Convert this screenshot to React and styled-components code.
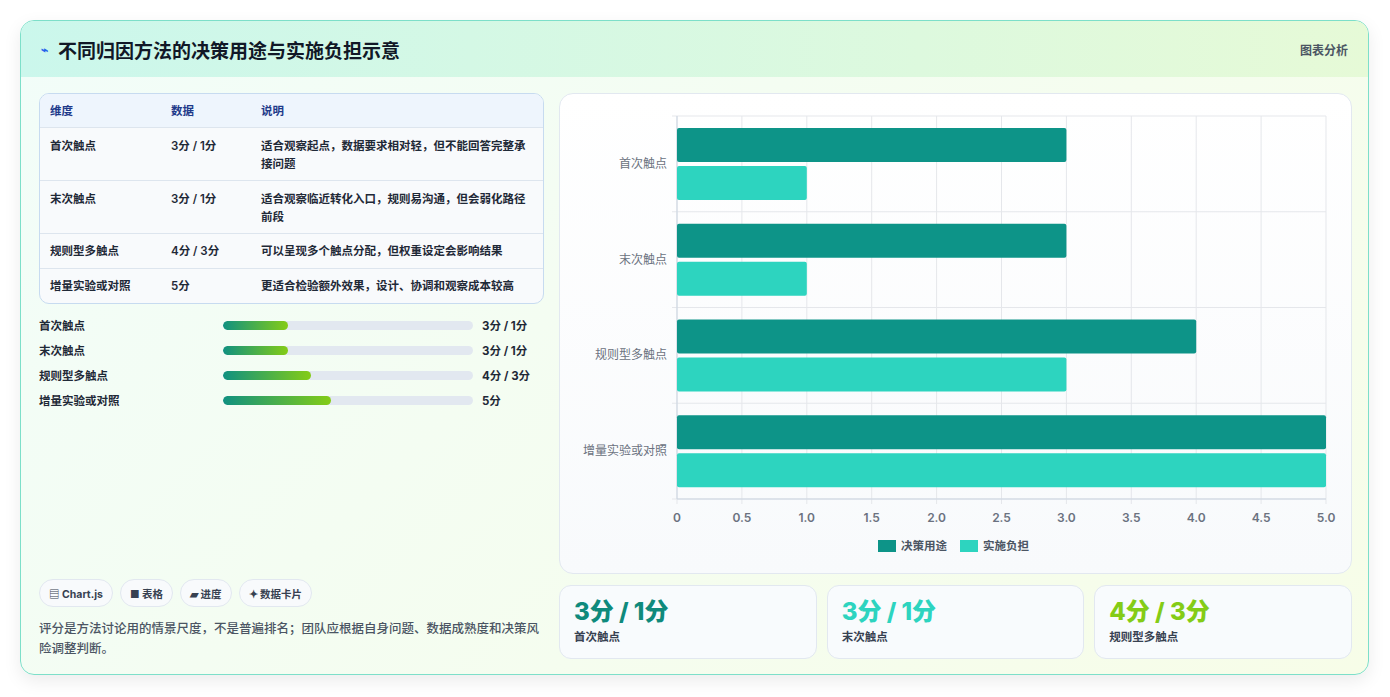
import React from "react";
import styled, { createGlobalStyle } from "styled-components";

const G = createGlobalStyle`
  body{margin:0;background:#f3f4f6;font-family:Inter,"Noto Sans CJK SC",sans-serif;}
  *{box-sizing:border-box;}
`;
const Page = styled.div`padding:20px 21px 22px 20px;height:697px;background:#fff;`;
const Card = styled.div`
  height:655px;border:1px solid #7ddfc9;border-radius:14px;overflow:hidden;
  background:linear-gradient(135deg,#f2fdf9,#f7fde8);display:flex;flex-direction:column;
  box-shadow:0 6px 18px rgba(0,0,0,.08);
`;
const Header = styled.div`
  height:56px;flex:none;display:flex;align-items:center;justify-content:space-between;padding:0 20px 0 20px;
  background:linear-gradient(90deg,#cbf7ec,#e6fad7);
`;
const Title = styled.h1`margin:0;font-size:19px;font-weight:700;color:#111827;display:flex;align-items:center;gap:10px;`;
const Badge = styled.span`font-size:12px;font-weight:600;color:#4b5563;`;
const Body = styled.div`flex:1;display:grid;grid-template-columns:505px 1fr;gap:15px;padding:16px 18px 18px 18px;`;
const Left = styled.div`display:flex;flex-direction:column;`;
const Table = styled.div`border:1px solid #c7dbf0;border-radius:10px;overflow:hidden;background:#f8fafc;`;
const Row = styled.div`
  display:grid;grid-template-columns:121px 90px 1fr;padding:0 10px;border-top:${p=>p.$head?"none":"1px solid #dde5ee"};
  background:${p=>p.$head?"#eef5fd":"transparent"};font-size:11.5px;font-weight:600;color:${p=>p.$head?"#1e3a8a":"#1f2937"};
  min-height:${p=>p.$h}px;align-items:${p=>p.$top?"start":"center"};padding-top:${p=>p.$top?"9px":"0"};line-height:18px;
`;
const Prog = styled.div`display:flex;flex-direction:column;gap:7px;margin-top:12px;`;
const PRow = styled.div`display:grid;grid-template-columns:184px 250px 1fr;align-items:center;font-size:11.5px;font-weight:600;color:#1f2937;height:18px;`;
const Track = styled.div`height:9px;border-radius:5px;background:#e2e8f0;overflow:hidden;`;
const Fill = styled.div`height:100%;border-radius:5px;background:linear-gradient(90deg,#109180,#84cc16);`;
const Val = styled.span`padding-left:9px;font-weight:700;`;
const Chips = styled.div`margin-top:auto;display:flex;gap:7px;`;
const Chip = styled.span`height:28px;padding:0 9px;border:1px solid #e2e8f0;border-radius:14px;background:#f8fafc;font-size:10.5px;font-weight:700;color:#374151;display:flex;align-items:center;gap:3px;`;
const Note = styled.p`margin:12px 0 0;font-size:12.5px;line-height:20px;color:#4b5563;font-weight:500;`;
const Right = styled.div`display:flex;flex-direction:column;gap:11px;`;
const ChartBox = styled.div`height:481px;border:1px solid #e2e8f0;border-radius:14px;background:linear-gradient(180deg,#fff,#f8fafc);`;
const Stats = styled.div`display:grid;grid-template-columns:repeat(3,1fr);gap:10px;`;
const Stat = styled.div`height:74px;border:1px solid #e2e8f0;border-radius:12px;background:#f8fbfd;padding:10px 14px;`;
const SVal = styled.div`font-size:24px;font-weight:800;color:${p=>p.$c};line-height:32px;`;
const SLab = styled.div`font-size:11.5px;font-weight:600;color:#374151;`;

const rows=[["首次触点","3分 / 1分","适合观察起点，数据要求相对轻，但不能回答完整承接问题",53],["末次触点","3分 / 1分","适合观察临近转化入口，规则易沟通，但会弱化路径前段",53],["规则型多触点","4分 / 3分","可以呈现多个触点分配，但权重设定会影响结果",35],["增量实验或对照","5分","更适合检验额外效果，设计、协调和观察成本较高",35]];
const data=[[3,1],[3,1],[4,3],[5,5]];
const pct=[26,26,35,43];

function Chart(){
  const x0=117,y0=22,w=649,h=383,u=w/5,band=h/4;
  return <svg width="791" height="481">
    {Array.from({length:11}).map((_,i)=><g key={i}>
      <line x1={x0+i*u/2} x2={x0+i*u/2} y1={y0} y2={y0+h+5} stroke="#e5e7eb"/>
      <text x={x0+i*u/2} y={y0+h+23} fontSize="12" fontWeight="600" fill="#6b7280" textAnchor="middle">{(i/2).toFixed(i===0?0:1)}</text>
    </g>)}
    {[0,1,2,3,4].map(i=><line key={i} x1={x0-5} x2={x0+w} y1={y0+i*band} y2={y0+i*band} stroke="#e5e7eb"/>)}
    <line x1={x0} x2={x0} y1={y0} y2={y0+h} stroke="#cbd5e1"/>
    <line x1={x0} x2={x0+w} y1={y0+h} y2={y0+h} stroke="#cbd5e1"/>
    {data.map((d,i)=>{const by=y0+i*band+12;return <g key={i}>
      <rect x={x0} y={by} width={d[0]*u} height={34} fill="#0d9488" rx="2"/>
      <rect x={x0} y={by+38} width={d[1]*u} height={34} fill="#2dd4bf" rx="2"/>
      <text x={x0-10} y={y0+i*band+band/2+4} fontSize="12" fill="#6b7280" textAnchor="end" fontFamily="Noto Sans CJK SC">{rows[i][0]}</text>
    </g>})}
    <rect x="318" y="446" width="18" height="12" fill="#0d9488"/>
    <text x="341" y="456" fontSize="11.5" fill="#4b5563" fontWeight="600">决策用途</text>
    <rect x="400" y="446" width="18" height="12" fill="#2dd4bf"/>
    <text x="423" y="456" fontSize="11.5" fill="#4b5563" fontWeight="600">实施负担</text>
  </svg>;
}

export default function App(){
  return <><G/><Page><Card>
    <Header><Title><span style={{color:"#2563eb",fontSize:12}}>⌁</span>不同归因方法的决策用途与实施负担示意</Title><Badge>图表分析</Badge></Header>
    <Body>
      <Left>
        <Table>
          <Row $head $h={33}><span>维度</span><span>数据</span><span>说明</span></Row>
          {rows.map(r=><Row key={r[0]} $h={r[3]} $top={r[3]>40}><span>{r[0]}</span><span>{r[1]}</span><span>{r[2]}</span></Row>)}
        </Table>
        <Prog>
          {rows.map((r,i)=><PRow key={r[0]}><span>{r[0]}</span><Track><Fill style={{width:pct[i]+"%"}}/></Track><Val>{r[1]}</Val></PRow>)}
        </Prog>
        <Chips><Chip>▤ Chart.js</Chip><Chip>■ 表格</Chip><Chip>▰ 进度</Chip><Chip>✦ 数据卡片</Chip></Chips>
        <Note>评分是方法讨论用的情景尺度，不是普遍排名；团队应根据自身问题、数据成熟度和决策风险调整判断。</Note>
      </Left>
      <Right>
        <ChartBox><Chart/></ChartBox>
        <Stats>
          <Stat><SVal $c="#0f8a7c">3分 / 1分</SVal><SLab>首次触点</SLab></Stat>
          <Stat><SVal $c="#2dd4bf">3分 / 1分</SVal><SLab>末次触点</SLab></Stat>
          <Stat><SVal $c="#84cc16">4分 / 3分</SVal><SLab>规则型多触点</SLab></Stat>
        </Stats>
      </Right>
    </Body>
  </Card></Page></>;
}
